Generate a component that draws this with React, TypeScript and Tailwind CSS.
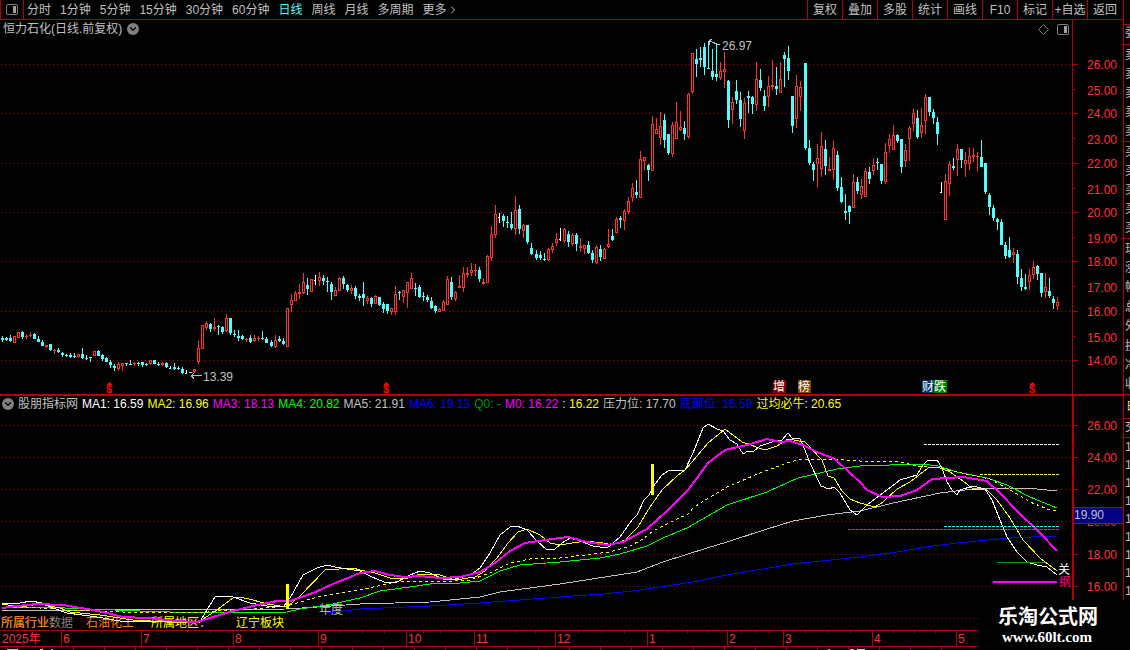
import React from 'react';
import { ChevronDown, ChevronRight } from 'lucide-react';

type Kind = 'u' | 'd' | 'w';
type Candle = [number, number, number, number, Kind];

const RED = '#b00000';
const LABEL = '#ff3232';
const KIND_COLOR: Record<Kind, string> = { u: '#ff3232', d: '#54fcfc', w: '#ffffff' };

const periods = ['分时', '1分钟', '5分钟', '15分钟', '30分钟', '60分钟', '日线', '周线', '月线', '多周期'];
const tools = ['复权', '叠加', '多股', '统计', '画线', 'F10', '标记', '+自选', '返回'];

const indicators = [
  { text: 'MA1: 16.59', color: 'text-white' },
  { text: 'MA2: 16.96', color: 'text-[#ffff00]' },
  { text: 'MA3: 18.13', color: 'text-[#ff00ff]' },
  { text: 'MA4: 20.82', color: 'text-[#00ff00]' },
  { text: 'MA5: 21.91', color: 'text-[#c0c0c0]' },
  { text: 'MA6: 19.13', color: 'text-[#0000ff]' },
  { text: 'Q0: -', color: 'text-[#009600]' },
  { text: 'M0: 16.22', color: 'text-[#ff00ff]' },
  { text: ': 16.22', color: 'text-[#ffff00]' },
  { text: '压力位: 17.70', color: 'text-[#c0c0c0]' },
  { text: '底部位: 16.59', color: 'text-[#0000ff]' },
  { text: '过均必牛: 20.65', color: 'text-[#ffff00]' },
];

// order book and quote rows, mostly cut off by the window edge
const sellRows = ['卖', '卖', '卖', '卖', '卖'];
const buyRows = ['买', '买', '买', '买', '买'];
const quoteRows = ['现', '涨', '幅', '总', '外', '换', '净', '收'];
const tickRows = ['1', '1', '1', '1', '1', '1', '1', '1', '1'];

// high, body top, body bottom, low, kind
const candles: Candle[] = [
  [336, 338, 340, 342, 'd'], [337, 338, 340, 341, 'd'], [335, 338, 341, 342, 'd'], [336, 336, 343, 343, 'u'],
  [332, 332, 338, 338, 'u'], [331, 332, 337, 339, 'd'], [334, 336, 337, 339, 'u'], [332, 335, 336, 337, 'u'],
  [333, 334, 339, 339, 'd'], [336, 339, 342, 342, 'd'], [340, 342, 346, 346, 'd'], [345, 345, 347, 348, 'u'],
  [344, 344, 350, 351, 'd'], [349, 350, 351, 354, 'u'], [348, 350, 352, 353, 'd'], [352, 353, 355, 357, 'd'],
  [354, 355, 356, 357, 'd'], [353, 355, 357, 358, 'd'], [353, 356, 357, 358, 'd'], [354, 354, 357, 358, 'u'],
  [348, 354, 358, 359, 'd'], [355, 358, 359, 360, 'd'], [357, 357, 358, 362, 'd'], [351, 351, 356, 356, 'u'],
  [350, 351, 356, 356, 'd'], [354, 355, 359, 361, 'd'], [357, 358, 362, 362, 'd'], [360, 362, 365, 368, 'd'],
  [364, 366, 368, 371, 'd'], [362, 364, 369, 371, 'u'], [363, 363, 366, 371, 'u'], [363, 363, 364, 366, 'd'],
  [360, 364, 365, 365, 'd'], [362, 363, 364, 366, 'u'], [362, 363, 364, 366, 'd'], [362, 362, 365, 367, 'd'],
  [363, 364, 365, 366, 'd'], [360, 360, 364, 365, 'u'], [360, 360, 364, 364, 'd'], [362, 364, 365, 366, 'd'],
  [362, 363, 365, 366, 'u'], [362, 363, 367, 368, 'd'], [366, 368, 369, 369, 'w'], [363, 367, 369, 370, 'd'],
  [366, 368, 369, 370, 'd'], [367, 369, 373, 374, 'd'], [370, 373, 374, 374, 'w'], [372, 372, 373, 373, 'd'],
  [369, 369, 372, 373, 'u'], [341, 348, 362, 364, 'u'], [325, 325, 349, 349, 'u'], [321, 323, 328, 330, 'u'],
  [323, 324, 329, 332, 'd'], [318, 327, 329, 331, 'u'], [325, 326, 327, 335, 'd'], [326, 327, 332, 334, 'd'],
  [314, 318, 331, 332, 'u'], [318, 318, 333, 335, 'd'], [330, 334, 335, 337, 'd'], [330, 336, 338, 341, 'd'],
  [335, 336, 339, 340, 'd'], [338, 339, 340, 342, 'u'], [335, 338, 342, 343, 'd'], [335, 338, 341, 342, 'u'],
  [336, 338, 339, 341, 'u'], [331, 338, 339, 340, 'd'], [337, 339, 343, 343, 'd'], [340, 342, 346, 347, 'd'],
  [335, 340, 347, 348, 'u'], [336, 339, 341, 342, 'd'], [338, 341, 344, 345, 'd'], [308, 308, 347, 347, 'u'],
  [294, 300, 305, 312, 'u'], [291, 293, 301, 301, 'u'], [284, 292, 294, 299, 'u'], [273, 282, 293, 294, 'u'],
  [278, 285, 289, 295, 'd'], [279, 279, 292, 292, 'u'], [275, 280, 281, 285, 'w'], [272, 277, 281, 286, 'u'],
  [275, 278, 281, 285, 'd'], [277, 281, 282, 292, 'd'], [282, 284, 292, 300, 'd'], [287, 290, 296, 296, 'u'],
  [277, 278, 291, 291, 'u'], [276, 278, 284, 289, 'd'], [284, 285, 290, 292, 'd'], [285, 288, 291, 294, 'u'],
  [286, 288, 296, 299, 'd'], [294, 296, 298, 301, 'd'], [282, 294, 298, 306, 'd'], [296, 298, 301, 304, 'u'],
  [297, 298, 304, 307, 'd'], [295, 296, 304, 304, 'u'], [297, 297, 305, 306, 'd'], [302, 304, 309, 313, 'd'],
  [304, 304, 311, 314, 'd'], [308, 308, 312, 315, 'u'], [286, 294, 312, 315, 'u'], [291, 292, 293, 300, 'd'],
  [290, 290, 297, 303, 'u'], [282, 282, 293, 308, 'u'], [273, 278, 289, 289, 'u'], [283, 288, 289, 296, 'd'],
  [285, 287, 297, 298, 'd'], [292, 296, 297, 301, 'd'], [295, 297, 300, 302, 'd'], [297, 301, 308, 309, 'd'],
  [305, 306, 311, 313, 'd'], [308, 309, 312, 312, 'u'], [300, 302, 311, 311, 'u'], [276, 279, 305, 305, 'u'],
  [277, 282, 297, 300, 'd'], [291, 292, 299, 301, 'u'], [275, 286, 288, 288, 'u'], [267, 273, 288, 292, 'u'],
  [267, 273, 275, 278, 'u'], [263, 270, 273, 276, 'u'], [264, 270, 271, 276, 'u'], [267, 270, 279, 282, 'd'],
  [278, 282, 284, 285, 'u'], [255, 256, 283, 283, 'u'], [226, 234, 258, 261, 'u'], [205, 214, 235, 238, 'u'],
  [213, 217, 218, 223, 'w'], [214, 216, 221, 227, 'd'], [216, 222, 223, 228, 'd'], [212, 224, 228, 230, 'd'],
  [196, 210, 229, 235, 'u'], [205, 209, 229, 234, 'd'], [224, 225, 231, 238, 'u'], [225, 225, 242, 244, 'd'],
  [243, 248, 254, 255, 'd'], [250, 254, 258, 260, 'd'], [251, 255, 258, 260, 'd'], [253, 259, 260, 261, 'd'],
  [248, 249, 260, 261, 'u'], [243, 246, 250, 253, 'u'], [233, 239, 243, 246, 'u'], [228, 239, 240, 241, 'w'],
  [228, 229, 241, 243, 'u'], [231, 234, 242, 247, 'd'], [233, 235, 244, 246, 'u'], [233, 235, 244, 251, 'd'],
  [238, 246, 248, 252, 'u'], [245, 245, 249, 254, 'u'], [241, 245, 253, 254, 'd'], [250, 253, 260, 263, 'd'],
  [245, 247, 263, 264, 'u'], [245, 249, 257, 261, 'd'], [248, 249, 259, 259, 'u'], [229, 244, 247, 248, 'u'],
  [229, 236, 240, 241, 'd'], [217, 219, 233, 233, 'u'], [216, 218, 220, 228, 'd'], [209, 211, 221, 230, 'u'],
  [197, 201, 212, 214, 'u'], [183, 188, 198, 202, 'u'], [180, 192, 195, 198, 'd'], [151, 159, 198, 198, 'u'],
  [157, 157, 161, 170, 'u'], [164, 165, 170, 181, 'd'], [116, 124, 171, 171, 'u'], [118, 129, 134, 134, 'u'],
  [112, 126, 138, 145, 'u'], [114, 120, 140, 148, 'd'], [134, 134, 153, 155, 'd'], [122, 125, 154, 157, 'u'],
  [102, 122, 139, 139, 'u'], [111, 127, 130, 131, 'u'], [121, 128, 134, 140, 'd'], [93, 94, 137, 139, 'u'],
  [53, 53, 92, 94, 'u'], [49, 59, 64, 77, 'd'], [47, 58, 60, 67, 'd'], [43, 47, 67, 75, 'd'],
  [41, 68, 69, 69, 'd'], [49, 71, 77, 80, 'd'], [43, 74, 77, 81, 'd'], [62, 71, 78, 80, 'u'],
  [52, 69, 72, 88, 'u'], [80, 81, 120, 128, 'd'], [97, 102, 110, 124, 'u'], [80, 91, 100, 104, 'd'],
  [92, 100, 119, 127, 'd'], [98, 103, 131, 139, 'u'], [91, 96, 98, 113, 'd'], [96, 97, 104, 114, 'd'],
  [62, 79, 105, 111, 'u'], [69, 80, 88, 91, 'd'], [90, 96, 106, 111, 'd'], [76, 86, 97, 107, 'u'],
  [60, 85, 87, 90, 'u'], [67, 86, 89, 95, 'd'], [62, 79, 93, 93, 'u'], [52, 55, 59, 87, 'd'],
  [46, 58, 71, 80, 'd'], [96, 96, 126, 133, 'd'], [75, 86, 119, 128, 'u'], [81, 87, 97, 111, 'u'],
  [63, 63, 148, 150, 'd'], [140, 148, 163, 165, 'd'], [162, 164, 170, 181, 'd'], [144, 158, 164, 187, 'u'],
  [132, 146, 169, 177, 'u'], [140, 149, 166, 175, 'd'], [157, 169, 171, 171, 'u'], [141, 148, 170, 180, 'u'],
  [151, 155, 188, 191, 'd'], [177, 187, 202, 203, 'd'], [194, 211, 213, 220, 'd'], [205, 206, 212, 224, 'd'],
  [174, 182, 208, 208, 'u'], [177, 182, 191, 194, 'd'], [179, 186, 195, 199, 'u'], [168, 171, 197, 197, 'u'],
  [167, 172, 179, 184, 'd'], [158, 165, 171, 175, 'u'], [158, 162, 163, 170, 'd'], [164, 164, 181, 184, 'd'],
  [143, 152, 182, 184, 'u'], [134, 139, 146, 153, 'u'], [125, 135, 150, 150, 'u'], [134, 135, 141, 143, 'd'],
  [139, 139, 167, 173, 'd'], [144, 150, 161, 167, 'u'], [126, 128, 139, 161, 'u'], [109, 113, 124, 131, 'u'],
  [110, 118, 137, 139, 'd'], [108, 125, 133, 138, 'u'], [94, 97, 121, 134, 'u'], [97, 97, 112, 116, 'd'],
  [109, 112, 118, 124, 'd'], [117, 122, 134, 145, 'd'], [182, 192, 193, 193, 'w'], [174, 181, 220, 220, 'u'],
  [161, 164, 184, 196, 'u'], [158, 166, 168, 170, 'd'], [144, 149, 160, 176, 'u'], [149, 149, 160, 168, 'd'],
  [152, 160, 164, 177, 'u'], [147, 156, 164, 170, 'u'], [148, 155, 157, 162, 'u'], [152, 156, 157, 171, 'u'],
  [140, 157, 167, 167, 'd'], [163, 163, 192, 194, 'd'], [193, 195, 207, 215, 'd'], [205, 208, 218, 221, 'd'],
  [218, 219, 222, 230, 'd'], [219, 222, 245, 245, 'd'], [242, 245, 256, 259, 'd'], [237, 250, 257, 258, 'd'],
  [248, 252, 255, 263, 'u'], [250, 254, 277, 284, 'd'], [269, 278, 287, 291, 'd'], [274, 287, 289, 290, 'd'],
  [269, 275, 282, 290, 'u'], [261, 267, 275, 279, 'u'], [265, 266, 274, 280, 'd'], [273, 273, 293, 297, 'd'],
  [273, 287, 292, 298, 'u'], [278, 291, 296, 298, 'd'], [296, 299, 303, 309, 'd'], [297, 302, 306, 310, 'u'],
];

const candleX = (i: number) => 2 + i * 4 + Math.floor(i / 66.5);

const priceGrid = [64, 113, 163, 212, 261, 311, 360];
const priceLabels: [string, number][] = [
  ['26.00', 64], ['25.00', 90], ['24.00', 113], ['23.00', 139], ['22.00', 163], ['21.00', 189], ['20.00', 212],
  ['19.00', 238], ['18.00', 261], ['17.00', 287], ['16.00', 311], ['15.00', 337], ['14.00', 360],
];

const maGrid = [425, 457, 489, 521, 554, 586, 618];
const maLabels: [string, number][] = [
  ['26.00', 425], ['24.00', 457], ['22.00', 489], ['20.00', 521], ['18.00', 554], ['16.00', 586],
];

const months: [string, number][] = [
  ['6', 61], ['7', 141], ['8', 233], ['9', 318], ['10', 406], ['11', 474], ['12', 555],
  ['1', 647], ['2', 727], ['3', 783], ['4', 872], ['5', 956],
];

const ma1 =
  '2,603 20,603 31,601 42,603 50,607 67,613 97,617 120,621 135,622 150,621 187,622 200,622 205,613 215,597 220,596 233,597 250,603 267,606 284,606 290,598 303,575 317,568 327,565 335,567 360,571 372,577 384,582 395,583 410,575 420,571 430,573 445,580 455,579 470,575 480,568 490,553 500,535 510,527 517,526 527,530 537,541 547,550 555,549 562,543 570,538 580,541 593,546 607,548 613,543 620,537 632,520 637,515 644,500 649,495 653,487 662,475 668,471 685,470 693,453 703,428 708,424 717,429 723,431 730,440 737,444 743,454 748,451 753,452 760,446 772,442 782,440 788,433 792,438 800,439 805,450 810,463 821,486 829,489 834,487 840,493 850,510 857,515 867,505 883,493 900,480 917,475 923,465 928,460 937,460 942,468 947,482 952,490 957,495 960,490 973,486 985,489 992,500 1000,520 1007,537 1017,552 1027,562 1037,565 1047,567 1057,575';
const ma2 =
  '2,604 20,607 40,604 60,608 70,612 100,615 133,620 167,622 193,623 200,621 217,610 233,598 240,597 253,600 267,604 287,607 300,596 325,570 353,568 360,570 375,573 390,578 405,579 420,574 440,575 455,580 475,577 485,571 497,558 508,543 518,532 527,529 540,535 550,543 560,545 585,541 603,543 613,545 625,540 638,527 650,507 662,490 677,476 686,469 708,443 725,429 742,442 765,450 777,446 788,439 805,442 822,460 828,476 834,478 842,491 850,499 860,503 875,507 883,502 897,489 910,482 928,468 938,467 950,472 963,481 973,489 987,490 997,500 1010,518 1023,540 1040,558 1057,571';
const ma3 =
  '2,608 17,606 37,604 63,605 87,609 103,612 123,617 147,618 177,621 197,622 213,617 233,611 253,606 277,601 290,601 313,593 333,584 360,573 375,571 390,575 405,577 420,576 440,578 460,577 480,572 495,563 510,551 525,543 545,540 568,537 587,542 607,545 623,542 647,529 667,511 688,490 697,478 708,463 725,450 747,445 767,439 780,442 790,441 803,445 817,452 835,459 850,473 860,482 867,490 882,497 900,496 917,490 932,479 963,477 987,481 1000,493 1017,511 1040,533 1057,551';
const ma4 =
  '2,607 40,607 90,609 140,611 200,613 287,612 300,609 333,604 360,598 380,591 410,587 430,584 460,583 480,581 500,571 520,565 560,562 600,558 620,554 647,546 663,538 687,528 727,505 767,492 798,478 837,469 860,466 890,465 922,464 938,466 957,472 987,478 1007,485 1030,497 1057,508';
const ma5 =
  '2,611 33,610 100,610 287,609 317,607 360,604 430,602 480,597 500,592 530,588 560,584 637,572 663,562 707,548 727,542 767,529 793,521 827,515 860,511 893,503 940,493 973,489 1010,488 1037,489 1057,491';
const ma6 =
  '327,613 360,609 430,606 480,603 560,597 603,594 633,591 660,587 693,582 727,575 793,564 860,557 897,552 933,546 967,542 1010,538 1057,536';
const bull =
  '2,607 40,608 67,610 123,612 173,612 200,613 217,611 253,609 287,606 317,597 360,590 400,581 440,582 470,580 490,573 510,563 530,559 560,558 593,554 610,552 630,546 643,539 653,531 673,521 688,514 693,508 710,497 727,487 760,473 787,463 797,460 833,459 860,461 900,462 917,466 940,468 957,472 990,479 1010,490 1030,502 1050,510 1057,511';

function PanelIcon() {
  return (
    <svg className="h-[11px] w-3" viewBox="0 0 12 11" fill="none" aria-hidden="true">
      <rect x="0.5" y="0.5" width="11" height="10" rx="1.5" stroke="#808080" />
      <rect x="7" y="2" width="3" height="7" fill="#a0a0a0" />
    </svg>
  );
}

function RoundToggle({ label }: { label: string }) {
  return (
    <button
      type="button"
      aria-label={label}
      className="flex h-3 w-3 shrink-0 items-center justify-center rounded-full bg-[#808080] text-black"
    >
      <ChevronDown className="h-[10px] w-[10px]" strokeWidth={3} />
    </button>
  );
}

function GridLines({ ys }: { ys: number[] }) {
  return (
    <>
      {ys.map((y) => (
        <line key={y} x1="1" x2="1072" y1={y + 0.5} y2={y + 0.5} stroke={RED} strokeDasharray="1 3" />
      ))}
    </>
  );
}

function CandleShape({ candle, index }: { candle: Candle; index: number }) {
  const [high, top, bottom, low, kind] = candle;
  const x = candleX(index);
  const color = KIND_COLOR[kind];
  const h = Math.max(bottom - top, 1);
  if (kind === 'w') {
    return (
      <g fill={color}>
        <rect x={x} y={high} width="1" height={low - high} />
        <rect x={x - 1} y={top} width="1" height="1" />
      </g>
    );
  }
  return (
    <g fill={color}>
      <rect x={x} y={high} width="1" height={Math.max(low - high, 1)} />
      <rect x={x - 1} y={top} width="3" height={h} />
      {kind === 'u' && h > 2 && <rect x={x} y={top + 1} width="1" height={h - 2} fill="#000" />}
    </g>
  );
}

function DividendMark({ x }: { x: number }) {
  return (
    <g fill="#ff0000">
      <path d={`M${x - 3} 385h6l-3 -3z`} />
      <text x={x} y="393" fontSize="11" fontWeight="bold" textAnchor="middle">$</text>
    </g>
  );
}

function Badge({ x, text, fill }: { x: number; text: string; fill: string }) {
  return (
    <g>
      <rect x={x} y="380" width="13" height="13" fill={fill} />
      <text x={x} y="391" fontSize="12" fill="#fff">{text}</text>
    </g>
  );
}

function PriceChart() {
  return (
    <svg className="block h-auto w-full" viewBox="0 38 1123 356" shapeRendering="crispEdges" fontSize="12">
      <GridLines ys={priceGrid} />
      <rect x="1072" y="38" width="1" height="356" fill={RED} />
      {priceGrid.map((y) => (
        <rect key={y} x="1073" y={y} width="5" height="1" fill={RED} />
      ))}
      {priceGrid.slice(0, -1).map((y) => (
        <rect key={y} x="1073" y={y + 25} width="2" height="1" fill={RED} />
      ))}
      {priceLabels.map(([text, y]) => (
        <text key={text} x="1087" y={y + 5} fill={LABEL}>{text}</text>
      ))}
      {candles.map((c, i) => (
        <CandleShape key={i} candle={c} index={i} />
      ))}
      <g stroke="#c0c0c0" fill="none">
        <path d="M709 41l11 4M709 41l3 -2M709 41l1 4" />
        <path d="M191 375.5h11M191 375.5l3 -2M191 375.5l3 3" />
      </g>
      <g fill="#c0c0c0">
        <text x="722" y="50">26.97</text>
        <text x="203" y="381">13.39</text>
      </g>
      <DividendMark x={109} />
      <DividendMark x={386} />
      <DividendMark x={1032} />
      <Badge x={773} text="增" fill="#800000" />
      <Badge x={798} text="榜" fill="#804000" />
      <Badge x={922} text="财" fill="#003366" />
      <Badge x={934} text="跌" fill="#008000" />
    </svg>
  );
}

function MaChart() {
  return (
    <svg className="block h-auto w-full" viewBox="0 412 1123 238" shapeRendering="crispEdges" fontSize="12">
      <GridLines ys={maGrid} />
      <rect x="1072" y="412" width="2" height="188" fill={RED} />
      {maGrid.map((y) => (
        <g key={y} fill={RED}>
          <rect x="1074" y={y} width="4" height="1" />
          <rect x="1074" y={y + 16} width="1" height="1" />
        </g>
      ))}
      {maLabels.map(([text, y]) => (
        <text key={text} x="1087" y={y + 5} fill={LABEL}>{text}</text>
      ))}
      <rect x="1074" y="507" width="49" height="17" fill={RED} />
      <rect x="1074" y="508" width="49" height="15" fill="#000080" />
      <text x="1074" y="519" fill="#c0c0c0">19.90</text>

      <text x="1" y="627" fill="#808080">所属行业数据</text>
      <text x="1" y="627" fill="#ff8000">所属行业：</text>
      <text x="86" y="627" fill="#ff8000">石油化工</text>
      <text x="151" y="627" fill="#ffff00">所属地区：</text>
      <text x="236" y="627" fill="#ffff00">辽宁板块</text>
      <text x="319" y="614" fill="#c0c0c0">年度</text>

      <g fill="none">
        <polyline points={ma6} stroke="#0000ff" />
        <polyline points={ma5} stroke="#c0c0c0" />
        <polyline points={ma4} stroke="#00ff00" />
        <polyline points={bull} stroke="#ffff00" strokeDasharray="3 3" />
        <polyline points={ma2} stroke="#ffff00" />
        <polyline points={ma1} stroke="#ffffff" />
        <polyline points={ma3} stroke="#ff00ff" strokeWidth="2" />
        <path d="M924 444.5h135" stroke="#ffffff" strokeDasharray="3 1" />
        <path d="M980 474.5h79" stroke="#ffff00" strokeDasharray="3 1" />
        <path d="M944 526.5h115" stroke="#00ffff" strokeDasharray="3 1" />
        <path d="M848 529.5h211" stroke="#ff00ff" strokeDasharray="3 1" />
        <path d="M997 562.5h48" stroke="#009600" />
        <path d="M993 582h64" stroke="#ff00ff" strokeWidth="2" />
      </g>
      <rect x="286" y="584" width="3" height="25" fill="#ffff00" />
      <rect x="651" y="464" width="3" height="31" fill="#ffff00" />
      <text x="1058" y="574" fill="#ffffff">关</text>
      <text x="1059" y="586" fill="#ff0080">纲</text>

      <g fill={RED}>
        <rect x="0" y="630" width="1123" height="1" />
        <rect x="0" y="646" width="1123" height="1" />
        {months.map(([, x]) => (
          <rect key={x} x={x} y="631" width="1" height="15" />
        ))}
        {months.map(([, x], i) => {
          const step = ((months[i + 1]?.[1] ?? x + 84) - x) / 4;
          return [1, 2, 3].map((n) => (
            <rect key={`${x}-${n}`} x={Math.round(x + step * n)} y="631" width="1" height="2" />
          ));
        })}
        {Array.from({ length: 30 }, (_, i) => (
          <rect key={i} x={42 + i * 31} y="647" width="1" height="3" />
        ))}
      </g>
      <path d="M7 649.5h11M40 649.5h3M51 649.5h2M828 649.5h2" stroke="#c0c0c0" />
      <path d="M850 649.5h4M857 649.5h8" stroke="#54fcfc" />
      <text x="2" y="643" fill={LABEL}>2025年</text>
      {months.map(([text, x]) => (
        <text key={x} x={x + 2} y="643" fill={LABEL}>{text}</text>
      ))}
    </svg>
  );
}

function QuoteRows({ rows }: { rows: string[] }) {
  return (
    <ul className="flex flex-col justify-around border-b border-[#b00000]">
      {rows.map((row, i) => (
        <li key={i} className="pl-px">{row}</li>
      ))}
    </ul>
  );
}

export default function App() {
  return (
    <div className="relative flex min-h-screen overflow-hidden bg-black font-['Liberation_Sans','Noto_Sans_CJK_SC',sans-serif] text-xs leading-4 text-[#c0c0c0]">
      <div className="min-w-0 flex-1">
        <header className="flex h-5 items-stretch justify-between border-b border-[#b00000]">
          <nav className="flex items-center">
            <button
              type="button"
              aria-label="侧栏"
              className="flex w-6 items-center justify-center self-stretch border-x border-[#b00000]"
            >
              <PanelIcon />
            </button>
            <div className="flex items-center gap-[9px] pl-[3px]">
              {periods.map((p) => (
                <button key={p} type="button" className={p === '日线' ? 'text-[#54fcfc]' : ''}>
                  {p}
                </button>
              ))}
              <button type="button" className="flex items-center">
                更多
                <ChevronRight className="h-3 w-3" strokeWidth={2} />
              </button>
            </div>
          </nav>
          <div className="flex pr-px">
            {tools.map((t) => (
              <button
                key={t}
                type="button"
                className="w-[35px] whitespace-nowrap border-l border-[#b00000] text-center"
              >
                {t}
              </button>
            ))}
          </div>
        </header>

        <section>
          <div className="flex h-[18px] items-stretch">
            <div className="flex flex-1 items-center gap-[5px] pl-[3px]">
              <h1>恒力石化(日线.前复权)</h1>
              <RoundToggle label="主图设置" />
            </div>
            <div className="flex items-center gap-2 pr-[3px]">
              <svg className="h-[11px] w-[11px]" viewBox="0 0 11 11" fill="none" aria-hidden="true">
                <path d="M5.5 0.5l5 5l-5 5l-5 -5z" stroke="#808080" />
              </svg>
              <PanelIcon />
            </div>
            <div className="w-[51px] border-l border-[#b00000]" />
          </div>
          <PriceChart />
        </section>

        <section className="border-t-2 border-[#b00000]">
          <div className="flex h-4 items-stretch">
            <div className="flex flex-1 items-center gap-1 whitespace-nowrap pl-[2px]">
              <RoundToggle label="指标设置" />
              <h2>股朋指标网</h2>
              {indicators.map((item) => (
                <span key={item.text} className={item.color}>{item.text}</span>
              ))}
            </div>
            <div className="w-[51px] border-l-2 border-[#b00000]" />
          </div>
          <MaChart />
        </section>
      </div>

      <aside className="grid w-[7px] shrink-0 grid-rows-[25px_20px_97px_97px_156px_24px_19px_162px] overflow-hidden border-l border-[#b00000]">
        <div className="border-b border-[#b00000]" />
        <div className="border-b border-[#b00000] pl-px">委</div>
        <QuoteRows rows={sellRows} />
        <QuoteRows rows={buyRows} />
        <QuoteRows rows={quoteRows} />
        <div className="border-b border-[#b00000] pl-[3px] pt-1 text-[#ffff00]">时</div>
        <div className="border-b border-[#b00000] pl-px">交</div>
        <ul className="leading-[18px]">
          {tickRows.map((row, i) => (
            <li key={i} className="pl-px">{row}</li>
          ))}
        </ul>
      </aside>

      <footer className="absolute bottom-0 right-0 flex h-[50px] w-[152px] flex-col justify-center bg-black pl-5 text-white">
        <strong className="text-xl leading-6">乐淘公式网</strong>
        <a href="#" className="pl-1 font-['Liberation_Serif',serif] text-[15px] font-bold leading-4">
          www.60lt.com
        </a>
      </footer>
    </div>
  );
}
